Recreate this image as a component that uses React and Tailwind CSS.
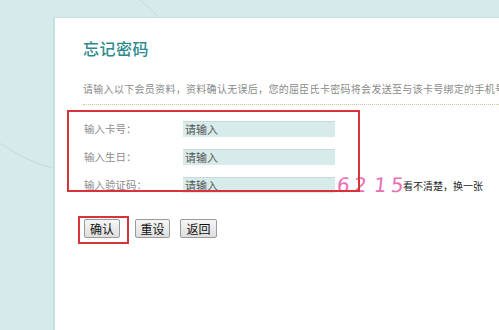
export default function App() {
  const rows = [
    { label: "输入卡号：" },
    { label: "输入生日：" },
    { label: "输入验证码：", captcha: true },
  ]

  return (
    <div className="relative w-[499px] h-[330px] overflow-hidden bg-[#d6eaeb] pt-[17px] pl-[53px] font-['Noto_Sans_CJK_SC',sans-serif]">
      {/* faint background arcs */}
      <svg className="absolute left-0 top-0" width="499" height="330" fill="none">
        <path d="M-20 128 Q 20 162 60 170" stroke="#c2dcdd" strokeWidth="1" />
        <path d="M140 0 Q 150 8 160 18" stroke="#c2dcdd" strokeWidth="1" />
      </svg>

      {/* Panel */}
      <div className="relative h-full overflow-hidden bg-white border-l-2 border-t border-[#c4e0e0] pl-[28px] pt-[20px]">
        <h1 className="h-[20px] leading-[20px] text-[16px] font-medium text-[#2f8a8e] tracking-[0.5px]">忘记密码</h1>

        <p className="mt-[24px] h-[14px] leading-[14px] text-[10px] tracking-[0.3px] text-[#8a8a8a] whitespace-nowrap">
          请输入以下会员资料，资料确认无误后，您的屈臣氏卡密码将会发送至与该卡号绑定的手机号码
        </p>

        <div className="mt-[8px] border-t border-dotted border-[#cfc39a]" />

        {/* Form */}
        <div className="mt-[16px] flex flex-col gap-[12px]">
          {rows.map(({ label, captcha }) => (
            <div key={label} className="flex items-center h-[16px]">
              <span className="w-[100px] pl-[1px] text-[10.5px] text-[#8c8c8c]">{label}</span>
              <div className="w-[152px] h-[16px] bg-[#d8ebeb] border-t border-[#c6dcdc] pl-[2px] text-[11px] leading-[15px] text-[#555]">
                请输入
              </div>
              {captcha && (
                <div className="flex items-end ml-[2px] h-[16px] whitespace-nowrap">
                  <span className="flex w-[66px] -mb-[2px] text-[20px] leading-[20px] text-[#e871b6] font-['DejaVu_Sans',sans-serif]">
                    <span className="w-[17px] -skew-x-6">6</span>
                    <span className="w-[20px] -skew-x-6">2</span>
                    <span className="w-[17px] -skew-x-6">1</span>
                    <span className="w-[12px] -skew-x-6">5</span>
                  </span>
                  <span className="text-[10px] leading-[14px] text-[#222]">看不清楚，换一张</span>
                </div>
              )}
            </div>
          ))}
        </div>

        {/* Buttons */}
        <div className="mt-[26px] flex pl-[1px]">
          <button className="w-[36px] h-[19px] border border-[#9a9a9a] rounded-[2px] bg-gradient-to-b from-[#f6f6f6] to-[#dedede] text-[12px] leading-[17px] text-[#111]">
            确认
          </button>
          <button className="ml-[15px] w-[35px] h-[19px] border border-[#9a9a9a] rounded-[2px] bg-gradient-to-b from-[#f6f6f6] to-[#dedede] text-[12px] leading-[17px] text-[#111]">
            重设
          </button>
          <button className="ml-[10px] w-[37px] h-[19px] border border-[#9a9a9a] rounded-[2px] bg-gradient-to-b from-[#f6f6f6] to-[#dedede] text-[12px] leading-[17px] text-[#111]">
            返回
          </button>
        </div>
      </div>

      {/* red annotation boxes */}
      <div className="absolute left-[67px] top-[110px] w-[293px] h-[82px] border-2 border-[#d8333b]" />
      <div className="absolute left-[78px] top-[216px] w-[51px] h-[28px] border-2 border-[#d8333b]" />
    </div>
  )
}
